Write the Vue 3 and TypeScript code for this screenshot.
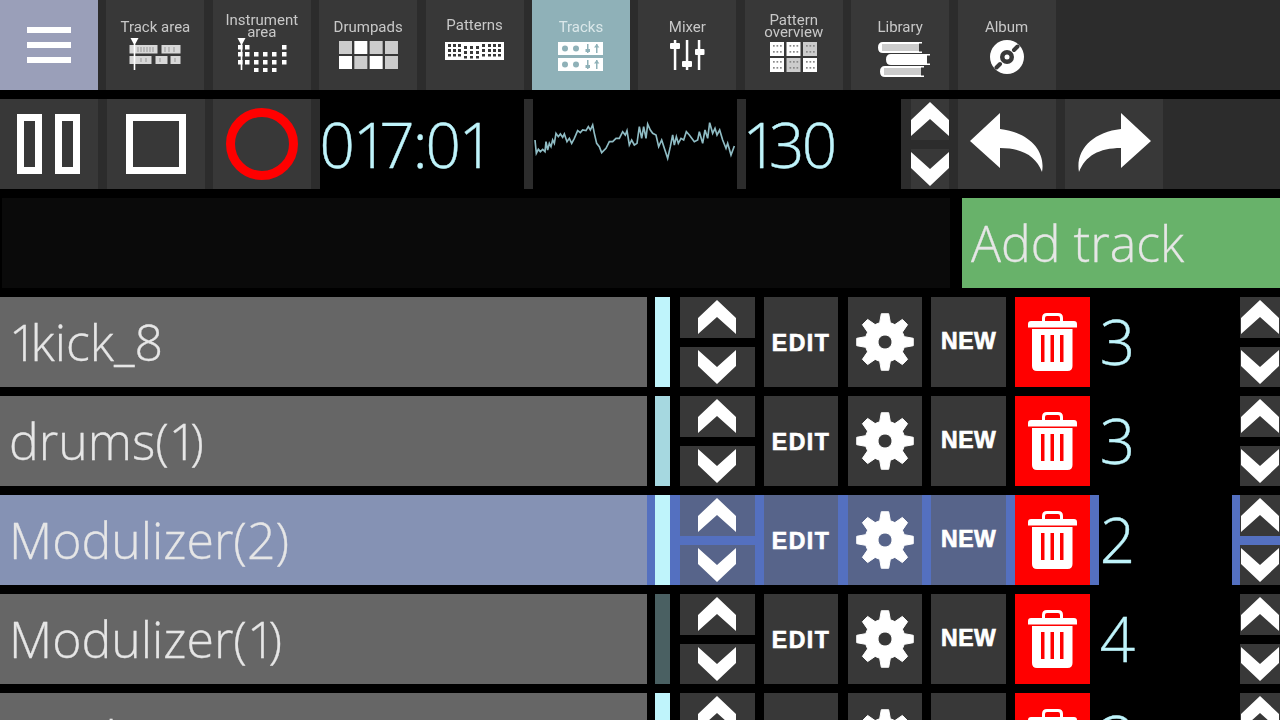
<script setup lang="ts">
interface Track {
  name: string
  count: number
  bar: string
  selected?: boolean
}

const tabs = [
  { id: 'trackarea', label: ['Track area'] },
  { id: 'instrument', label: ['Instrument', 'area'] },
  { id: 'drumpads', label: ['Drumpads'] },
  { id: 'patterns', label: ['Patterns'] },
  { id: 'tracks', label: ['Tracks'], active: true },
  { id: 'mixer', label: ['Mixer'] },
  { id: 'overview', label: ['Pattern', 'overview'] },
  { id: 'library', label: ['Library'] },
  { id: 'album', label: ['Album'] },
]

const tracks: Track[] = [
  { name: '1kick_8', count: 3, bar: '#bff4fb' },
  { name: 'drums(1)', count: 3, bar: '#a6d8e0' },
  { name: 'Modulizer(2)', count: 2, bar: '#bff4fb', selected: true },
  { name: 'Modulizer(1)', count: 4, bar: '#4a6062' },
  { name: 'Synth(1)', count: 3, bar: '#bff4fb' },
]

// the "1" glyph is much narrower in the original font, so it gets its own span
function runs(text: string): string[] {
  return text.split(/(1)/).filter(Boolean)
}

// gear outline: 8 teeth around a centre hole
function gearPath(): string {
  const pts: string[] = []
  for (let i = 0; i < 8; i++) {
    const a = (i * Math.PI) / 4 - Math.PI / 2
    const p = (r: number, off: number) => {
      const x = 29 + r * Math.cos(a + off)
      const y = 29 + r * Math.sin(a + off)
      return `${x.toFixed(2)} ${y.toFixed(2)}`
    }
    pts.push(p(20, -0.27), p(28.5, -0.13), p(28.5, 0.13), p(20, 0.27))
  }
  return `M${pts.join('L')}ZM29 22a7 7 0 1 0 0.01 0Z`
}
const gear = gearPath()

const instrumentDots = [
  [2, 7], [9, 7], [46, 7],
  [2, 14], [9, 14], [18, 14], [27, 14], [36, 14], [46, 14],
  [2, 22], [9, 22], [18, 22], [27, 22], [36, 22], [46, 22],
  [18, 30], [27, 30], [36, 30],
]

// waveform traced by hand from the reference, 3 units per pixel
const wave =
  '12,90 16,130 22,118 28,125 35,118 42,125 45,95 50,120 55,100 60,110 65,90 70,100 75,70 82,80 88,72 95,82 100,72 108,95 115,85 122,100 130,85 140,62 148,68 155,60 165,62 172,50 178,60 185,45 190,70 197,100 205,110 212,128 225,115 235,95 245,95 255,85 265,85 275,65 283,75 288,62 295,105 302,90 310,105 318,100 325,50 332,85 338,50 345,85 350,42 358,60 365,70 375,75 383,110 392,90 400,115 410,145 418,110 425,75 430,105 436,80 442,100 450,85 458,90 466,65 475,75 490,95 500,90 505,65 515,100 522,60 530,85 536,38 545,70 552,55 558,75 566,60 575,90 585,115 590,100 600,135 610,108'
</script>

<template>
  <div class="app">
    <svg class="defs" width="0" height="0">
      <symbol id="chev" viewBox="0 0 38 34">
        <path d="M0 18 19 0 38 18V34L19 17 0 34Z" fill="#fff" />
      </symbol>
      <symbol id="trash" viewBox="0 0 49 58">
        <path
          fill="#fff"
          fill-rule="evenodd"
          d="M14 8V5q0-5 5-5h11q5 0 5 5v3h11q3 0 3 3v3.500H0V11q0-3 3-3ZM17 8h15V5q0-2-2-2H19q-2 0-2 2ZM4 16h40.500v37q0 5-5 5H9q-5 0-5-5ZM13 22v27h3.500V22ZM22.500 22v27H26V22ZM32 22v27h3.500V22Z"
        />
      </symbol>
      <symbol id="gear" viewBox="0 0 58 58">
        <path :d="gear" fill="#fff" fill-rule="evenodd" stroke="#fff" stroke-width="1" stroke-linejoin="round" />
      </symbol>
    </svg>

    <nav class="tabs">
      <button class="menu" type="button" aria-label="Menu"><span /><span /><span /></button>
      <button
        v-for="tab in tabs"
        :key="tab.id"
        type="button"
        class="tab"
        :class="[tab.id, { active: tab.active }]"
      >
        <span class="tab-label" :class="{ two: tab.label.length > 1 }">
          <span v-for="line in tab.label" :key="line">{{ line }}</span>
        </span>

        <svg v-if="tab.id === 'trackarea'" width="52" height="32" viewBox="0 0 52 32">
          <g fill="#d8d8d8">
            <rect x="0.500" y="7" width="28" height="8.500" />
            <rect x="32.500" y="7" width="19" height="8.500" />
            <rect x="0.500" y="18" width="22" height="8" />
            <rect x="26.500" y="18" width="12" height="8" />
            <rect x="41.500" y="18" width="10" height="8" />
          </g>
          <path d="M9 9v5M12 9v5M15 9v5M18 9v5M21 9v5M24 9v5M36 9v5M40 9v5M45 9v5M12 20v4M17 20v4M31 20v4M46 20v4" stroke="#999" stroke-width="1" />
          <path d="M1.500 0h8L6.300 6v26H4.700V6Z" fill="#fff" />
        </svg>

        <svg v-else-if="tab.id === 'instrument'" width="52" height="34" viewBox="0 0 52 34">
          <path d="M1.500 0h8L6.300 6v26H4.700V6Z" fill="#fff" />
          <rect v-for="d in instrumentDots" :key="d.join()" :x="d[0]" :y="d[1]" width="4.500" height="4.500" fill="#fff" />
        </svg>

        <svg v-else-if="tab.id === 'drumpads'" width="59" height="28" viewBox="0 0 59 28">
          <rect
            v-for="(c, i) in ['#ccc', '#fff', '#ccc', '#ccc', '#fff', '#ccc', '#fff', '#ccc']"
            :key="i"
            :x="(i % 4) * 15.330"
            :y="i < 4 ? 0 : 15"
            width="13"
            height="13"
            :fill="c"
          />
        </svg>

        <svg v-else-if="tab.id === 'patterns'" width="59" height="18" viewBox="0 0 59 18">
          <rect width="59" height="18" fill="#fff" />
          <g fill="#383838">
            <template v-for="(x, i) in [3, 8, 13, 19, 25, 31, 37, 43, 48, 53]" :key="x">
              <rect :x="x" :y="i > 2 && i < 6 ? 4 : 2" width="3" height="3" />
              <rect :x="x" :y="i > 2 && i < 6 ? 9 : 7" width="3" height="3" />
              <rect :x="x" :y="i > 2 && i < 6 ? 14 : 12" width="3" height="2.500" />
            </template>
          </g>
        </svg>

        <svg v-else-if="tab.id === 'tracks'" width="45" height="29" viewBox="0 0 45 29">
          <g v-for="y in [0, 16]" :key="y" fill="#8fb1b8">
            <rect :y="y" width="45" height="13" fill="#fff" />
            <circle cx="7" :cy="y + 6.500" r="3" />
            <circle cx="18" :cy="y + 6.500" r="3" />
            <rect x="29" :y="y + 2" width="1.500" height="9" />
            <rect x="27.500" :y="y + 7" width="4.500" height="3" />
            <rect x="38" :y="y + 2" width="1.500" height="9" />
            <path :d="`M36 ${y + 5.500}l2.700-3.500 2.700 3.500Z`" />
          </g>
        </svg>

        <svg v-else-if="tab.id === 'mixer'" width="36" height="30" viewBox="0 0 36 30">
          <g fill="#fff">
            <rect x="4.800" width="2.500" height="30" />
            <rect x="1" y="3" width="10" height="6" rx="1" />
            <rect x="16.800" width="2.500" height="30" />
            <rect x="13" y="21" width="10" height="6" rx="1" />
            <rect x="28.800" width="2.500" height="30" />
            <rect x="26" y="9" width="9.500" height="6" rx="1" />
          </g>
        </svg>

        <svg v-else-if="tab.id === 'overview'" width="47" height="30" viewBox="0 0 47 30">
          <g v-for="(c, i) in ['#fff', '#fff', '#ccc', '#fff', '#ccc', '#fff']" :key="i" fill="#8a8a8a">
            <rect :x="(i % 3) * 16.500" :y="i < 3 ? 0 : 16" width="14" height="14" :fill="c" />
            <template v-for="col in [3, 6.500, 10]" :key="col">
              <rect :x="(i % 3) * 16.500 + col" :y="(i < 3 ? 0 : 16) + 3" width="1.700" height="1.700" />
              <rect :x="(i % 3) * 16.500 + col" :y="(i < 3 ? 0 : 16) + 9" width="1.700" height="1.700" />
            </template>
          </g>
        </svg>

        <svg v-else-if="tab.id === 'library'" width="52" height="35" viewBox="0 0 52 35">
          <path d="M5 0H44V1.500H41V9.500H44V11H5Q0 11 0 5.500T5 0Z" fill="#fff" />
          <rect x="4" y="2" width="37" height="7" fill="#ccc" />
          <path d="M13 12H52V13.500H49V21.500H52V23H13Q8 23 8 17.500T13 12Z" fill="#fff" />
          <path d="M7 24H46V25.500H43V33.500H46V35H7Q2 35 2 29.500T7 24Z" fill="#fff" />
          <rect x="6" y="26" width="37" height="7" fill="#ccc" />
        </svg>

        <svg v-else-if="tab.id === 'album'" width="34" height="34" viewBox="0 0 34 34">
          <circle cx="17" cy="17" r="17" fill="#fff" />
          <circle cx="17" cy="17" r="7" fill="#383838" />
          <circle cx="17" cy="17" r="2.500" fill="#fff" />
          <path d="M24 10l3.500-3.500M10 24l-3.500 3.500" stroke="#383838" stroke-width="4" stroke-linecap="round" />
        </svg>
      </button>
    </nav>

    <section class="transport">
      <button type="button" class="btn tbtn" aria-label="Pause">
        <svg width="64" height="60" viewBox="0 0 64 60" fill="none" stroke="#fff" stroke-width="7">
          <rect x="3.500" y="3.500" width="18" height="53" />
          <rect x="41.500" y="3.500" width="18" height="53" />
        </svg>
      </button>
      <button type="button" class="btn tbtn" aria-label="Stop">
        <svg width="60" height="60" viewBox="0 0 60 60" fill="none" stroke="#fff" stroke-width="7">
          <rect x="3.500" y="3.500" width="53" height="53" />
        </svg>
      </button>
      <button type="button" class="btn tbtn" aria-label="Record">
        <svg width="72" height="72" viewBox="0 0 72 72" fill="none" stroke="#f00" stroke-width="9">
          <circle cx="36" cy="36" r="31.500" />
        </svg>
      </button>
      <div class="time">
        <span v-for="(r, i) in runs('017:01')" :key="i" :class="{ one: r === '1' }">{{ r }}</span>
      </div>
      <div class="wave">
        <svg width="204" height="60" viewBox="6 0 612 180">
          <polyline :points="wave" fill="none" stroke="#8fbcc4" stroke-width="5" />
        </svg>
      </div>
      <div class="bpm">
        <span v-for="(r, i) in runs('130')" :key="i" :class="{ one: r === '1' }">{{ r }}</span>
      </div>
      <div class="updown slim">
        <button type="button" class="btn half" aria-label="Up">
          <svg class="chev" width="38" height="34"><use href="#chev" /></svg>
        </button>
        <button type="button" class="btn half" aria-label="Down">
          <svg class="chev flip" width="38" height="34"><use href="#chev" /></svg>
        </button>
      </div>
      <button type="button" class="btn hist" aria-label="Undo">
        <svg width="74" height="60" viewBox="0 0 74 60">
          <path d="M0 29 30 1V17C58 20 76 38 72 60 66 44 52 36 30 36V56Z" fill="#fff" />
        </svg>
      </button>
      <button type="button" class="btn hist" aria-label="Redo">
        <svg width="74" height="60" viewBox="0 0 74 60">
          <path d="M74 29 44 1V17C16 20-2 38 2 60 8 44 22 36 44 36V56Z" fill="#fff" />
        </svg>
      </button>
    </section>

    <section class="add-row">
      <div class="status" />
      <button type="button" class="add">Add track</button>
    </section>

    <section class="list">
      <div v-for="t in tracks" :key="t.name" class="row" :class="{ selected: t.selected }">
        <div class="name">
          <span v-for="(r, i) in runs(t.name)" :key="i" :class="{ one: r === '1' }">{{ r }}</span>
        </div>
        <div class="bar" :style="{ background: t.bar }" />
        <div class="updown">
          <button type="button" class="btn half" aria-label="Move up">
            <svg class="chev" width="38" height="34"><use href="#chev" /></svg>
          </button>
          <button type="button" class="btn half" aria-label="Move down">
            <svg class="chev flip" width="38" height="34"><use href="#chev" /></svg>
          </button>
        </div>
        <button type="button" class="btn cell word edit">EDIT</button>
        <button type="button" class="btn cell" aria-label="Settings">
          <svg width="58" height="58"><use href="#gear" /></svg>
        </button>
        <button type="button" class="btn cell word new">NEW</button>
        <button type="button" class="btn cell del" aria-label="Delete">
          <svg width="49" height="58"><use href="#trash" /></svg>
        </button>
        <div class="count"><span>{{ t.count }}</span></div>
        <div class="updown side">
          <button type="button" class="btn half" aria-label="More">
            <svg class="chev" width="38" height="34"><use href="#chev" /></svg>
          </button>
          <button type="button" class="btn half" aria-label="Less">
            <svg class="chev flip" width="38" height="34"><use href="#chev" /></svg>
          </button>
        </div>
      </div>
    </section>
  </div>
</template>

<style>
html,
body {
  margin: 0;
  background: #000;
  overflow: hidden;
}
</style>

<style scoped>
.app {
  width: 1280px;
  height: 720px;
  overflow: hidden;
  background: #000;
  display: flex;
  flex-direction: column;
  font-family: 'Open Sans', 'Noto Sans', sans-serif;
}
.defs {
  position: absolute;
}
button {
  border: 0;
  padding: 0;
  margin: 0;
  font: inherit;
  color: inherit;
  display: flex;
  align-items: center;
  justify-content: center;
  flex: none;
}
.btn {
  background: #383838;
}
.one {
  letter-spacing: -7px;
}

.tabs {
  height: 90px;
  flex: none;
  background: #2c2c2c;
  display: flex;
  gap: 8.400px;
}
.menu {
  width: 98px;
  background: #9a9fb9;
  flex-direction: column;
  gap: 9px;
}
.menu span {
  display: block;
  width: 44px;
  height: 6px;
  background: #fff;
}
.tab {
  width: 98px;
  background: #383838;
  flex-direction: column;
  justify-content: flex-start;
  color: #c8c8c8;
  font-family: Roboto, 'Liberation Sans', sans-serif;
  font-size: 15px;
}
.tab > * {
  filter: blur(0.4px);
}
.tab.active {
  background: #8fb1b8;
  color: #dbe8ea;
}
.tab svg {
  flex: none;
}
.tab-label {
  height: 38px;
  box-sizing: border-box;
  padding-bottom: 5px;
  display: flex;
  flex-direction: column;
  justify-content: flex-end;
  align-items: center;
  line-height: 12px;
}
.tab-label.two {
  padding-bottom: 0;
}
.drumpads svg {
  margin-top: 3px;
}
.patterns svg,
.tracks svg,
.overview svg,
.library svg {
  margin-top: 4px;
}
.mixer svg,
.album svg {
  margin-top: 2px;
}
.library svg {
  margin-left: 8px;
}
.patterns .tab-label {
  padding-bottom: 7px;
}

.transport {
  margin-top: 9px;
  height: 90px;
  flex: none;
  display: flex;
  background: #2c2c2c;
}
.tbtn {
  width: 98px;
  margin-right: 8.500px;
}
.time,
.bpm {
  color: #bff4fb;
  background: #000;
  font-weight: 300;
  font-size: 62px;
  line-height: 90px;
  letter-spacing: -2px;
  white-space: nowrap;
  -webkit-text-stroke: 0.4px #bff4fb;
  box-sizing: border-box;
}
.time .one,
.bpm .one {
  letter-spacing: -9px;
}
.time {
  width: 204px;
}
.wave {
  width: 204px;
  margin: 0 9px;
  background: #000;
  display: flex;
  align-items: center;
}
.wave svg {
  margin-bottom: 8px;
}
.bpm {
  width: 155.500px;
  letter-spacing: -2.500px;
  text-indent: -3px;
}
.updown {
  width: 75px;
  flex: none;
  display: flex;
  flex-direction: column;
  justify-content: space-between;
}
.half {
  height: 40.500px;
}
.slim {
  width: 38px;
  padding-left: 9.500px;
  margin-right: 9px;
}
.hist {
  width: 98px;
  margin-right: 9px;
}
.hist svg {
  margin-bottom: 4px;
}
.chev.flip {
  transform: scaleY(-1);
}

.add-row {
  margin-top: 9px;
  height: 90px;
  flex: none;
  display: flex;
}
.status {
  width: 948px;
  margin-left: 2px;
  background: #0a0a0a;
}
.add {
  margin-left: 12px;
  flex: 1;
  background: #68b26a;
  color: #e6e6e6;
  justify-content: flex-start;
  padding-left: 9px;
  font-size: 50px;
  font-weight: 300;
  -webkit-text-stroke: 0.3px #e6e6e6;
}

.list {
  margin-top: 9px;
  display: flex;
  flex-direction: column;
  gap: 9px;
}
.row {
  height: 90px;
  flex: none;
  display: flex;
}
.name {
  width: 647px;
  flex: none;
  background: #666;
  color: #e6e6e6;
  font-size: 50px;
  font-weight: 300;
  line-height: 90px;
  padding-left: 9px;
  box-sizing: border-box;
  -webkit-text-stroke: 0.3px #e6e6e6;
}
.bar {
  width: 15px;
  margin: 0 9.500px 0 8px;
  flex: none;
}
.cell {
  width: 74.500px;
  margin-left: 9.300px;
}
.word {
  color: #fff;
  font-family: 'Liberation Sans', sans-serif;
  font-weight: 700;
  font-size: 23px;
  -webkit-text-stroke: 0.7px #fff;
}
.edit {
  padding-top: 2px;
  letter-spacing: 1.500px;
}
.new {
  padding-bottom: 2px;
  letter-spacing: 0.500px;
}
.del {
  background: #f00;
}
.count {
  flex: 1;
  color: #bff4fb;
  font-size: 62px;
  font-weight: 300;
  line-height: 88px;
  padding-left: 10px;
  box-sizing: border-box;
  -webkit-text-stroke: 0.4px #bff4fb;
}
.side {
  width: 40px;
}
.row.selected {
  background: #5470c0;
}
.row.selected .cell:not(.del),
.row.selected > .updown:not(.side) .half {
  background: #57648a;
}
.row.selected .name {
  background: #8592b4;
}
.row.selected .count {
  margin: 0 8px 0 9px;
  padding-left: 1px;
  background: #000;
}
.row.selected .side .half {
  background: #383838;
}
</style>
